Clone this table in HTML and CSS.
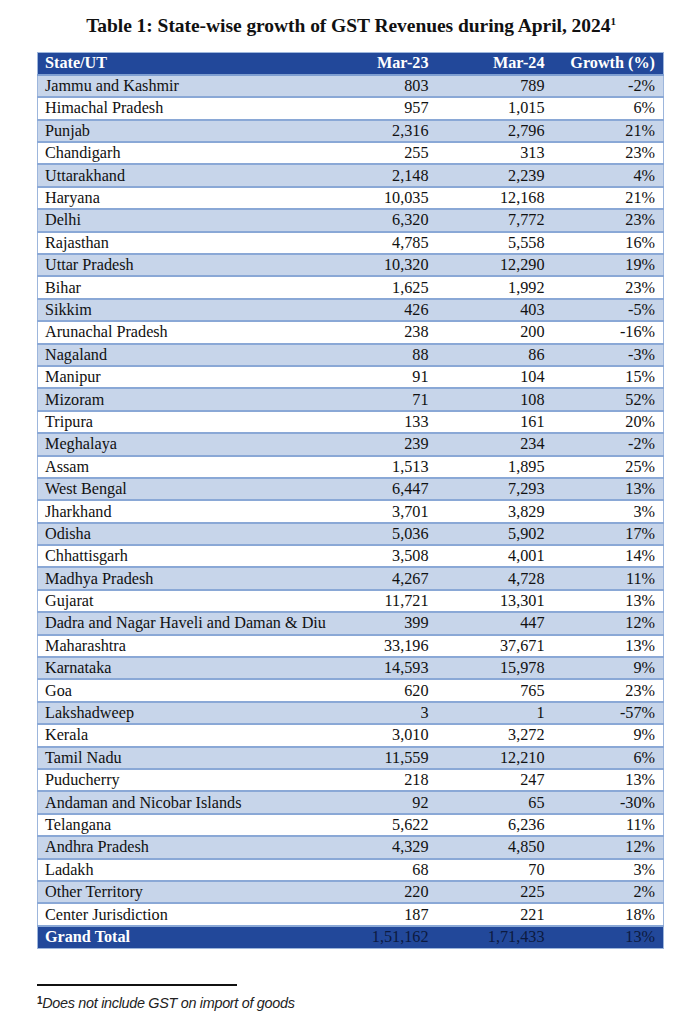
FILE: index.html
```html
<!DOCTYPE html>
<html>
<head>
<meta charset="utf-8">
<link rel="stylesheet" href="styles.css">
</head>
<body>
<div class="page">
  <h1 class="title">Table 1: State-wise growth of GST Revenues during April, 2024<sup>1</sup></h1>
  <table class="gst">
    <thead>
      <tr><th class="state">State/UT</th><th>Mar-23</th><th>Mar-24</th><th class="growth">Growth (%)</th></tr>
    </thead>
    <tbody>
      <tr><td class="state">Jammu and Kashmir</td><td>803</td><td>789</td><td class="growth">-2%</td></tr>
      <tr><td class="state">Himachal Pradesh</td><td>957</td><td>1,015</td><td class="growth">6%</td></tr>
      <tr><td class="state">Punjab</td><td>2,316</td><td>2,796</td><td class="growth">21%</td></tr>
      <tr><td class="state">Chandigarh</td><td>255</td><td>313</td><td class="growth">23%</td></tr>
      <tr><td class="state">Uttarakhand</td><td>2,148</td><td>2,239</td><td class="growth">4%</td></tr>
      <tr><td class="state">Haryana</td><td>10,035</td><td>12,168</td><td class="growth">21%</td></tr>
      <tr><td class="state">Delhi</td><td>6,320</td><td>7,772</td><td class="growth">23%</td></tr>
      <tr><td class="state">Rajasthan</td><td>4,785</td><td>5,558</td><td class="growth">16%</td></tr>
      <tr><td class="state">Uttar Pradesh</td><td>10,320</td><td>12,290</td><td class="growth">19%</td></tr>
      <tr><td class="state">Bihar</td><td>1,625</td><td>1,992</td><td class="growth">23%</td></tr>
      <tr><td class="state">Sikkim</td><td>426</td><td>403</td><td class="growth">-5%</td></tr>
      <tr><td class="state">Arunachal Pradesh</td><td>238</td><td>200</td><td class="growth">-16%</td></tr>
      <tr><td class="state">Nagaland</td><td>88</td><td>86</td><td class="growth">-3%</td></tr>
      <tr><td class="state">Manipur</td><td>91</td><td>104</td><td class="growth">15%</td></tr>
      <tr><td class="state">Mizoram</td><td>71</td><td>108</td><td class="growth">52%</td></tr>
      <tr><td class="state">Tripura</td><td>133</td><td>161</td><td class="growth">20%</td></tr>
      <tr><td class="state">Meghalaya</td><td>239</td><td>234</td><td class="growth">-2%</td></tr>
      <tr><td class="state">Assam</td><td>1,513</td><td>1,895</td><td class="growth">25%</td></tr>
      <tr><td class="state">West Bengal</td><td>6,447</td><td>7,293</td><td class="growth">13%</td></tr>
      <tr><td class="state">Jharkhand</td><td>3,701</td><td>3,829</td><td class="growth">3%</td></tr>
      <tr><td class="state">Odisha</td><td>5,036</td><td>5,902</td><td class="growth">17%</td></tr>
      <tr><td class="state">Chhattisgarh</td><td>3,508</td><td>4,001</td><td class="growth">14%</td></tr>
      <tr><td class="state">Madhya Pradesh</td><td>4,267</td><td>4,728</td><td class="growth">11%</td></tr>
      <tr><td class="state">Gujarat</td><td>11,721</td><td>13,301</td><td class="growth">13%</td></tr>
      <tr><td class="state">Dadra and Nagar Haveli and Daman &amp; Diu</td><td>399</td><td>447</td><td class="growth">12%</td></tr>
      <tr><td class="state">Maharashtra</td><td>33,196</td><td>37,671</td><td class="growth">13%</td></tr>
      <tr><td class="state">Karnataka</td><td>14,593</td><td>15,978</td><td class="growth">9%</td></tr>
      <tr><td class="state">Goa</td><td>620</td><td>765</td><td class="growth">23%</td></tr>
      <tr><td class="state">Lakshadweep</td><td>3</td><td>1</td><td class="growth">-57%</td></tr>
      <tr><td class="state">Kerala</td><td>3,010</td><td>3,272</td><td class="growth">9%</td></tr>
      <tr><td class="state">Tamil Nadu</td><td>11,559</td><td>12,210</td><td class="growth">6%</td></tr>
      <tr><td class="state">Puducherry</td><td>218</td><td>247</td><td class="growth">13%</td></tr>
      <tr><td class="state">Andaman and Nicobar Islands</td><td>92</td><td>65</td><td class="growth">-30%</td></tr>
      <tr><td class="state">Telangana</td><td>5,622</td><td>6,236</td><td class="growth">11%</td></tr>
      <tr><td class="state">Andhra Pradesh</td><td>4,329</td><td>4,850</td><td class="growth">12%</td></tr>
      <tr><td class="state">Ladakh</td><td>68</td><td>70</td><td class="growth">3%</td></tr>
      <tr><td class="state">Other Territory</td><td>220</td><td>225</td><td class="growth">2%</td></tr>
      <tr><td class="state">Center Jurisdiction</td><td>187</td><td>221</td><td class="growth">18%</td></tr>
    </tbody>
    <tfoot>
      <tr><td class="state">Grand Total</td><td>1,51,162</td><td>1,71,433</td><td class="growth">13%</td></tr>
    </tfoot>
  </table>
  <div class="footnote">
    <div class="rule"></div>
    <p class="note"><sup>1</sup>Does not include GST on import of goods</p>
  </div>
</div>
</body>
</html>
```

FILE: styles.css
```css
html, body {
  margin: 0;
  padding: 0;
  background: #ffffff;
}

.page {
  width: 692px;
  height: 1024px;
  box-sizing: border-box;
  padding: 13px 29px 0 37px;
  font-family: "Liberation Serif", "Times New Roman", serif;
  color: #111111;
}

.title {
  margin: 0 0 13px 0;
  text-align: center;
  font-size: 19.5px;
  font-weight: bold;
  line-height: 26px;
  letter-spacing: -0.05px;
  padding-left: 2px;
}

.title sup {
  font-size: 11px;
  vertical-align: 7px;
  line-height: 0;
}

.gst {
  width: 626px;
  border-collapse: collapse;
  table-layout: fixed;
  font-size: 16.2px;
  border: 1px solid #9db6dc;
}

.gst th,
.gst td {
  height: 22.4px;
  padding: 0 8px 0 0;
  box-sizing: border-box;
  text-align: right;
  white-space: nowrap;
  line-height: 20px;
  vertical-align: middle;
}

.gst th.state,
.gst td.state {
  text-align: left;
  padding-left: 7px;
  width: 308px;
}

.gst th:nth-child(2),
.gst td:nth-child(2) {
  width: 89px;
  padding-right: 6px;
}

.gst th:nth-child(3),
.gst td:nth-child(3) {
  width: 116px;
  padding-right: 6px;
}

.gst th.growth,
.gst td.growth {
  width: 113px;
  padding-right: 8px;
}

.gst thead th {
  background: #22489a;
  color: #ffffff;
  font-weight: bold;
  border-bottom: 2px solid #7f9fd1;
}

.gst tbody td {
  border-bottom: 2px solid #8aa8d6;
}

.gst tbody tr:nth-child(odd) td {
  background: #c7d5ea;
}

.gst tbody tr:nth-child(even) td {
  background: #ffffff;
}

.gst tfoot td {
  background: #22489a;
  color: #0c1a40;
}

.gst tfoot td.state {
  color: #ffffff;
  font-weight: bold;
}

.footnote {
  margin-top: 35px;
}

.rule {
  width: 200px;
  height: 2px;
  background: #111111;
}

.note {
  margin: 9px 0 0 0;
  font-family: "Liberation Sans", Arial, sans-serif;
  font-style: italic;
  font-size: 14.4px;
  line-height: 16px;
  letter-spacing: -0.3px;
  color: #222222;
}

.note sup {
  font-style: normal;
  font-weight: bold;
  font-size: 10px;
  vertical-align: 4px;
  line-height: 0;
}
```
